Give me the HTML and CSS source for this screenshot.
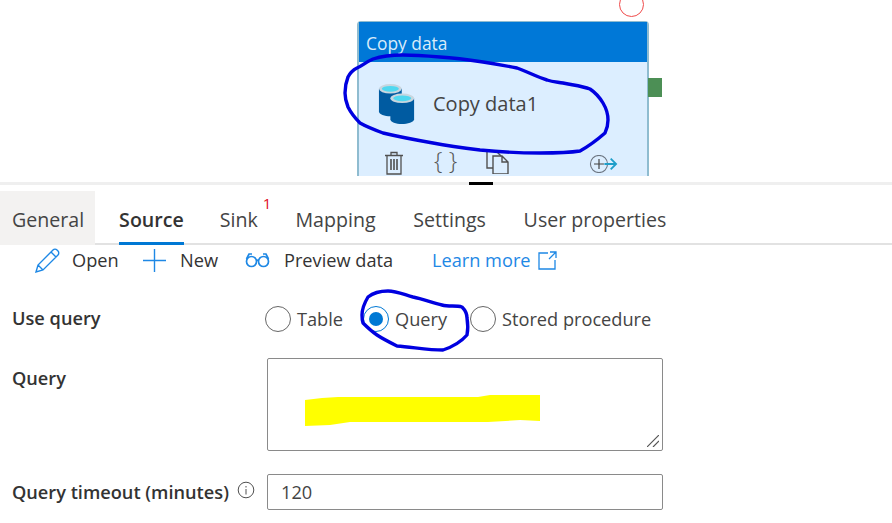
FILE: index.html
```html
<!DOCTYPE html>
<html lang="en">
<head>
<meta charset="utf-8">
<title>Copy data</title>
<link rel="stylesheet" href="styles.css">
</head>
<body>
<section class="canvas">
  <div class="run-circle"></div>
  <div class="node">
    <div class="node-head">Copy data</div>
    <div class="node-body">
      <svg class="db-icon" viewBox="0 0 40 44" width="38" height="42">
        <path d="M1 6v24c0 3 6 5 12 5s12-2 12-5V6z" fill="#005ba1"/>
        <ellipse cx="13" cy="6" rx="12" ry="5" fill="#c8d6df"/>
        <ellipse cx="13" cy="6" rx="9" ry="3" fill="#50d8f0"/>
        <path d="M13 16v22c0 3 6 5 12 5s13-2 13-5V16z" fill="#005ba1"/>
        <ellipse cx="25.500" cy="16" rx="12.500" ry="5" fill="#c8d6df"/>
        <ellipse cx="25.500" cy="16" rx="9.500" ry="3" fill="#50d8f0"/>
      </svg>
      <span class="node-name">Copy data1</span>
    </div>
    <div class="node-actions">
      <svg class="act act-trash" viewBox="0 0 20 24" width="20" height="24" fill="none" stroke="#505050" stroke-width="1.300">
        <path d="M1 4.500h18M7 4.500V1.500h6v3M3 4.500V23h14V4.500"/>
        <path d="M7 8v11M10 8v11M13 8v11" stroke-width="1.600"/>
      </svg>
      <span class="act act-braces">{ }</span>
      <svg class="act act-copy" viewBox="0 0 24 24" width="24" height="24" fill="none" stroke="#505050" stroke-width="1.400">
        <path d="M7 18H1V1h9l5 5"/>
        <path d="M7 6h9l6 6v12H7zM16 6v6h6"/>
      </svg>
      <svg class="act act-add" viewBox="0 0 32 20" width="29" height="18" fill="none">
        <circle cx="11" cy="10" r="9.500" stroke="#6b7480" stroke-width="1.200"/>
        <path d="M5.500 10h11M11 4.500v11" stroke="#404040" stroke-width="1.300"/>
        <path d="M17 10h13M24 4l6 6-6 6" stroke="#1e9ec9" stroke-width="2"/>
      </svg>
    </div>
  </div>
  <div class="out-port"></div>
</section>

<div class="splitter"><div class="grip"></div></div>

<nav class="tabs">
  <a class="tab tab-hover">General</a>
  <a class="tab tab-active">Source</a>
  <a class="tab">Sink<sup class="badge">1</sup></a>
  <a class="tab">Mapping</a>
  <a class="tab">Settings</a>
  <a class="tab">User properties</a>
</nav>

<div class="toolbar">
  <span class="tool tool-open">
    <svg viewBox="0 0 25 25" width="25" height="25" fill="none" stroke="#1e88e5" stroke-width="1.400">
      <path d="M1 24l2-7L18 2c1-1 3-1 4 0l1 1c1 1 1 3 0 4L8 22zM3 17l5 5M16 4l5 5"/>
    </svg>
    Open
  </span>
  <span class="tool tool-new">
    <svg viewBox="0 0 23 23" width="23" height="23" fill="none" stroke="#1e88e5" stroke-width="1.400">
      <path d="M11.500 0v23M0 11.500h23"/>
    </svg>
    New
  </span>
  <span class="tool tool-preview">
    <svg viewBox="0 0 25 16" width="25" height="16" fill="none" stroke="#1e88e5" stroke-width="1.700">
      <circle cx="6.500" cy="9.500" r="5"/><circle cx="18.500" cy="9.500" r="5"/>
      <path d="M11.500 8.500c1-.7 1-.7 2 0M1.500 7L4 2h3M23.500 7L21 2h-3"/>
    </svg>
    Preview data
  </span>
  <a class="learn">Learn more
    <svg viewBox="0 0 19 19" width="19" height="19" fill="none" stroke="#1e88e5" stroke-width="1.300">
      <path d="M10 2H1v16h16V9M11 8l7-7M12 1h6v6"/>
    </svg>
  </a>
</div>

<form class="form">
  <label class="lbl lbl-use">Use query</label>
  <div class="radios">
    <span class="radio-item"><i class="radio"></i>Table</span>
    <span class="radio-item item-query"><i class="radio radio-on"></i>Query</span>
    <span class="radio-item item-stored"><i class="radio"></i>Stored procedure</span>
  </div>
  <label class="lbl lbl-query">Query</label>
  <div class="textarea">
    <svg class="resize" viewBox="0 0 12 12" width="12" height="12" fill="none" stroke="#555" stroke-width="1.200">
      <path d="M0 12L12 0M6 12l6-6"/>
    </svg>
  </div>
  <label class="lbl lbl-timeout">Query timeout (minutes)
    <svg class="info" viewBox="0 0 18 18" width="18" height="18" fill="none" stroke="#505050" stroke-width="1">
      <circle cx="9" cy="9" r="7.800"/><path d="M9 8v5.500M9 5v1.500"/>
    </svg>
  </label>
  <div class="input">120</div>
</form>

<svg class="ink" viewBox="0 0 892 523" width="892" height="523" fill="none">
  <path fill="#ffff00" d="M305 400L322 398 338 397H478L490 395H540V421L520 420 488 422H350L330 425 305 426Z"/>
  <path stroke="#0000e0" stroke-width="3.400" stroke-linejoin="round" d="M357 68C362 66 366 62 373 59 382 56 392 55 403 55 416 55 428 56 440 57 456 58 470 60 483 62 496 64 507 66 517 68 528 72 537 77 547 80 553 82 558 82 563 83 572 85 582 86 590 89 596 93 600 98 603 103 606 108 608 114 608 120 608 125 607 129 605 133 597 140 589 146 580 151 567 153 553 153 540 153 520 153 500 152 480 150 464 148 449 146 433 143 416 140 400 137 383 133 375 130 367 127 360 123 355 118 351 113 348 107 346 102 345 98 345 93 345 87 346 82 348 77 350 73 353 70 357 68Z"/>
  <path stroke="#0000e0" stroke-width="3.400" stroke-linejoin="round" d="M362 315C362 309 365 302 368 297 373 293 380 291 388 291 397 291 405 295 413 297 423 299 433 303 442 305 449 307 456 305 462 307 465 310 467 314 467 318 468 324 468 330 467 335 460 343 452 347 443 350 428 350 412 347 397 346 389 342 383 339 377 335 371 331 367 327 363 323 362 320 362 318 362 315Z"/>
</svg>
</body>
</html>
```
FILE: styles.css
```css
* { box-sizing: border-box; }
html, body { margin: 0; padding: 0; }
body {
  position: relative;
  width: 892px;
  height: 523px;
  overflow: hidden;
  background: #fff;
  color: #333;
  font-family: "Open Sans", "Noto Sans", sans-serif;
  font-size: 18.200px;
}

/* Diagram canvas */
.canvas {
  position: relative;
  height: 176px;
  overflow: hidden;
}
.run-circle {
  position: absolute;
  left: 619px;
  top: -8px;
  width: 25px;
  height: 25px;
  border: 1.500px solid #f04b4b;
  border-radius: 50%;
}
.node {
  position: absolute;
  left: 357px;
  top: 21px;
  width: 292px;
  height: 170px;
  border: 2px solid #8fbcd0;
  border-top-width: 1px;
  border-radius: 4px 4px 0 0;
  background: #dceeff;
}
.node-head {
  height: 40px;
  padding: 7px 7px 0;
  background: #0078d7;
  color: #d8ebfa;
  font-size: 17.400px;
  line-height: 28px;
}
.node-body {
  display: flex;
  align-items: center;
  height: 82px;
  padding: 2px 0 0 19px;
}
.db-icon { flex: none; }
.node-name {
  margin-left: 17px;
  margin-top: -2px;
  color: #444;
  font-size: 20px;
}
.node-actions {
  position: relative;
  height: 30px;
}
.act { position: absolute; }
.act-trash { left: 25px; top: 7px; }
.act-braces {
  left: 75px;
  top: 1px;
  color: #555;
  font-size: 24px;
  font-weight: 300;
  line-height: 30px;
}
.act-copy { left: 127px; top: 6px; }
.act-add { left: 230px; top: 11px; }
.out-port {
  position: absolute;
  left: 648px;
  top: 78px;
  width: 14px;
  height: 19px;
  background: #4c8f55;
}

/* Splitter */
.splitter {
  position: relative;
  height: 3px;
  margin-top: 6px;
  background: #efefef;
}
.grip {
  position: absolute;
  left: 469px;
  top: 0;
  width: 24px;
  height: 3px;
  background: #000;
}

/* Tabs */
.tabs {
  display: flex;
  height: 54px;
  margin-top: 6px;
  border-bottom: 2px solid #e2e2e2;
}
.tab {
  position: relative;
  display: flex;
  margin-right: 37.700px;
  height: 54px;
  padding-top: 14px;
  line-height: 30px;
  color: #444;
  font-size: 19.600px;
}
.tab-hover {
  margin-right: 24px;
  padding: 14px 11px 0 12px;
  background: #f3f2f1;
}
.tab-active {
  margin-right: 36px;
  border-bottom: 3px solid #0078d4;
  color: #333;
  font-weight: 600;
}
.badge {
  position: absolute;
  left: 43px;
  top: 4px;
  color: #e00b1c;
  font-size: 15px;
  line-height: 16px;
}

/* Toolbar */
.toolbar {
  display: flex;
  align-items: center;
  height: 30px;
  padding-left: 35px;
}
.tool {
  display: flex;
  align-items: center;
}
.tool svg { flex: none; }
.tool-open { width: 108px; gap: 12px; }
.tool-new { width: 102px; gap: 14px; }
.tool-preview { width: 187px; gap: 14px; }
.learn {
  display: flex;
  align-items: center;
  gap: 7px;
  color: #1e88e5;
}

/* Form */
.form {
  display: grid;
  grid-template-columns: 255px 396px;
  grid-template-rows: 30px 93px 36px;
  row-gap: 23px;
  margin-top: 30px;
  padding-left: 12px;
}
.lbl {
  color: #333;
  font-size: 18.200px;
  font-weight: 600;
  line-height: 27px;
}
.lbl-use { margin-top: 0; }
.lbl-query { margin-top: 7px; }
.lbl-timeout {
  display: flex;
  align-items: center;
  gap: 8px;
  white-space: nowrap;
}
.info { flex: none; margin-top: -4px; }
.radios {
  display: flex;
  align-items: center;
  align-self: start;
  height: 27px;
  margin-left: -2px;
}
.radio-item {
  display: flex;
  align-items: center;
  gap: 6px;
  width: 98px;
  color: #444;
}
.item-query { width: 107px; }
.item-stored { width: auto; white-space: nowrap; }
.radio {
  flex: none;
  position: relative;
  width: 26px;
  height: 26px;
  border: 1px solid #666;
  border-radius: 50%;
}
.radio-on { border-color: #0078d4; }
.radio-on::after {
  content: "";
  position: absolute;
  left: 5px;
  top: 5px;
  width: 14px;
  height: 14px;
  border-radius: 50%;
  background: #0078d4;
}
.textarea {
  position: relative;
  border: 1px solid #8a8a8a;
  border-radius: 2px;
}
.resize {
  position: absolute;
  right: 3px;
  bottom: 3px;
}
.input {
  padding-left: 13px;
  border: 1px solid #8a8a8a;
  border-radius: 2px;
  color: #444;
  line-height: 35px;
}

/* Hand-drawn annotations painted over the screenshot */
.ink {
  position: absolute;
  left: 0;
  top: 0;
  pointer-events: none;
}
```
